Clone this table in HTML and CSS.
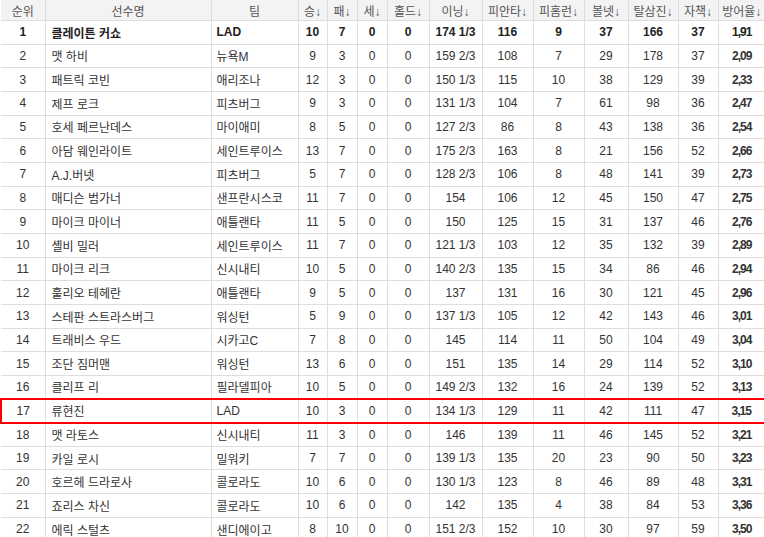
FILE: index.html
```html
<!DOCTYPE html>
<html lang="ko">
<head>
<meta charset="utf-8">
<title>투수 순위</title>
<link rel="stylesheet" href="styles.css">
</head>
<body>
<table class="rank">
<colgroup>
<col class="c-rank"><col class="c-name"><col class="c-team"><col class="c-w"><col class="c-l"><col class="c-sv"><col class="c-hld"><col class="c-ip"><col class="c-h"><col class="c-hr"><col class="c-bb"><col class="c-so"><col class="c-er"><col class="c-era">
</colgroup>
<thead>
<tr><th>순위</th><th>선수명</th><th>팀</th><th>승↓</th><th>패↓</th><th>세↓</th><th>홀드↓</th><th>이닝↓</th><th>피안타↓</th><th>피홈런↓</th><th>볼넷↓</th><th>탈삼진↓</th><th>자책↓</th><th>방어율↓</th></tr>
</thead>
<tbody>
<tr class="bold"><td>1</td><td class="nm">클레이튼 커쇼</td><td class="tm">LAD</td><td>10</td><td>7</td><td>0</td><td>0</td><td>174 1/3</td><td>116</td><td>9</td><td>37</td><td>166</td><td>37</td><td class="era">1,91</td></tr>
<tr><td>2</td><td class="nm">맷 하비</td><td class="tm">뉴욕M</td><td>9</td><td>3</td><td>0</td><td>0</td><td>159 2/3</td><td>108</td><td>7</td><td>29</td><td>178</td><td>37</td><td class="era">2,09</td></tr>
<tr><td>3</td><td class="nm">패트릭 코빈</td><td class="tm">애리조나</td><td>12</td><td>3</td><td>0</td><td>0</td><td>150 1/3</td><td>115</td><td>10</td><td>38</td><td>129</td><td>39</td><td class="era">2,33</td></tr>
<tr><td>4</td><td class="nm">제프 로크</td><td class="tm">피츠버그</td><td>9</td><td>3</td><td>0</td><td>0</td><td>131 1/3</td><td>104</td><td>7</td><td>61</td><td>98</td><td>36</td><td class="era">2,47</td></tr>
<tr><td>5</td><td class="nm">호세 페르난데스</td><td class="tm">마이애미</td><td>8</td><td>5</td><td>0</td><td>0</td><td>127 2/3</td><td>86</td><td>8</td><td>43</td><td>138</td><td>36</td><td class="era">2,54</td></tr>
<tr><td>6</td><td class="nm">아담 웨인라이트</td><td class="tm">세인트루이스</td><td>13</td><td>7</td><td>0</td><td>0</td><td>175 2/3</td><td>163</td><td>8</td><td>21</td><td>156</td><td>52</td><td class="era">2,66</td></tr>
<tr><td>7</td><td class="nm">A.J.버넷</td><td class="tm">피츠버그</td><td>5</td><td>7</td><td>0</td><td>0</td><td>128 2/3</td><td>106</td><td>8</td><td>48</td><td>141</td><td>39</td><td class="era">2,73</td></tr>
<tr><td>8</td><td class="nm">매디슨 범가너</td><td class="tm">샌프란시스코</td><td>11</td><td>7</td><td>0</td><td>0</td><td>154</td><td>106</td><td>12</td><td>45</td><td>150</td><td>47</td><td class="era">2,75</td></tr>
<tr><td>9</td><td class="nm">마이크 마이너</td><td class="tm">애틀랜타</td><td>11</td><td>5</td><td>0</td><td>0</td><td>150</td><td>125</td><td>15</td><td>31</td><td>137</td><td>46</td><td class="era">2,76</td></tr>
<tr><td>10</td><td class="nm">셸비 밀러</td><td class="tm">세인트루이스</td><td>11</td><td>7</td><td>0</td><td>0</td><td>121 1/3</td><td>103</td><td>12</td><td>35</td><td>132</td><td>39</td><td class="era">2,89</td></tr>
<tr><td>11</td><td class="nm">마이크 리크</td><td class="tm">신시내티</td><td>10</td><td>5</td><td>0</td><td>0</td><td>140 2/3</td><td>135</td><td>15</td><td>34</td><td>86</td><td>46</td><td class="era">2,94</td></tr>
<tr><td>12</td><td class="nm">훌리오 테헤란</td><td class="tm">애틀랜타</td><td>9</td><td>5</td><td>0</td><td>0</td><td>137</td><td>131</td><td>16</td><td>30</td><td>121</td><td>45</td><td class="era">2,96</td></tr>
<tr><td>13</td><td class="nm">스테판 스트라스버그</td><td class="tm">워싱턴</td><td>5</td><td>9</td><td>0</td><td>0</td><td>137 1/3</td><td>105</td><td>12</td><td>42</td><td>143</td><td>46</td><td class="era">3,01</td></tr>
<tr><td>14</td><td class="nm">트래비스 우드</td><td class="tm">시카고C</td><td>7</td><td>8</td><td>0</td><td>0</td><td>145</td><td>114</td><td>11</td><td>50</td><td>104</td><td>49</td><td class="era">3,04</td></tr>
<tr><td>15</td><td class="nm">조단 짐머맨</td><td class="tm">워싱턴</td><td>13</td><td>6</td><td>0</td><td>0</td><td>151</td><td>135</td><td>14</td><td>29</td><td>114</td><td>52</td><td class="era">3,10</td></tr>
<tr><td>16</td><td class="nm">클리프 리</td><td class="tm">필라델피아</td><td>10</td><td>5</td><td>0</td><td>0</td><td>149 2/3</td><td>132</td><td>16</td><td>24</td><td>139</td><td>52</td><td class="era">3,13</td></tr>
<tr class="hl"><td>17</td><td class="nm">류현진</td><td class="tm">LAD</td><td>10</td><td>3</td><td>0</td><td>0</td><td>134 1/3</td><td>129</td><td>11</td><td>42</td><td>111</td><td>47</td><td class="era">3,15</td></tr>
<tr><td>18</td><td class="nm">맷 라토스</td><td class="tm">신시내티</td><td>11</td><td>3</td><td>0</td><td>0</td><td>146</td><td>139</td><td>11</td><td>46</td><td>145</td><td>52</td><td class="era">3,21</td></tr>
<tr><td>19</td><td class="nm">카일 로시</td><td class="tm">밀워키</td><td>7</td><td>7</td><td>0</td><td>0</td><td>139 1/3</td><td>135</td><td>20</td><td>23</td><td>90</td><td>50</td><td class="era">3,23</td></tr>
<tr><td>20</td><td class="nm">호르헤 드라로사</td><td class="tm">콜로라도</td><td>10</td><td>6</td><td>0</td><td>0</td><td>130 1/3</td><td>123</td><td>8</td><td>46</td><td>89</td><td>48</td><td class="era">3,31</td></tr>
<tr><td>21</td><td class="nm">죠리스 차신</td><td class="tm">콜로라도</td><td>10</td><td>6</td><td>0</td><td>0</td><td>142</td><td>135</td><td>4</td><td>38</td><td>84</td><td>53</td><td class="era">3,36</td></tr>
<tr><td>22</td><td class="nm">에릭 스털츠</td><td class="tm">샌디에이고</td><td>8</td><td>10</td><td>0</td><td>0</td><td>151 2/3</td><td>152</td><td>10</td><td>30</td><td>97</td><td>59</td><td class="era">3,50</td></tr>
</tbody>
</table>
</body>
</html>
```

FILE: styles.css
```css
html, body {
  margin: 0;
  padding: 0;
  background: #fff;
}
body {
  font-family: "Liberation Sans", "Noto Sans CJK KR", sans-serif;
  font-size: 12px;
  color: #333;
  overflow: hidden;
}
.rank {
  border-collapse: collapse;
  table-layout: fixed;
  width: 764px;
}
.c-rank { width: 44px; }
.c-name { width: 166px; }
.c-team { width: 87px; }
.c-w { width: 29px; }
.c-l { width: 30px; }
.c-sv { width: 30px; }
.c-hld { width: 42px; }
.c-ip { width: 53px; }
.c-h { width: 51px; }
.c-hr { width: 51px; }
.c-bb { width: 44px; }
.c-so { width: 50px; }
.c-er { width: 40px; }
.c-era { width: 47px; }

.rank th,
.rank td {
  border: 1px solid #dedede;
  padding: 0;
  text-align: center;
  white-space: nowrap;
  overflow: hidden;
}
.rank th:first-child,
.rank td:first-child {
  border-left: none;
}
.rank th:last-child,
.rank td:last-child {
  border-right: none;
}
.rank thead th {
  background: #f3f3f3;
  color: #555;
  font-weight: normal;
  height: 20px;
  border-top: none;
}
.rank tbody tr {
  height: 23.67px;
}
.rank td.nm {
  text-align: left;
  padding-left: 6px;
}
.rank td.tm {
  text-align: left;
  padding-left: 5px;
}
.rank td.era {
  font-weight: bold;
  letter-spacing: -1px;
}
.rank tr.bold td {
  font-weight: bold;
  color: #222;
}
.rank tr.hl td {
  border-top: 2px solid #f00;
  border-bottom: 2px solid #f00;
}
.rank tr.hl td:first-child {
  border-left: 2px solid #f00;
}
.rank tr.hl td:last-child {
  border-right: 2px solid #f00;
}
```
